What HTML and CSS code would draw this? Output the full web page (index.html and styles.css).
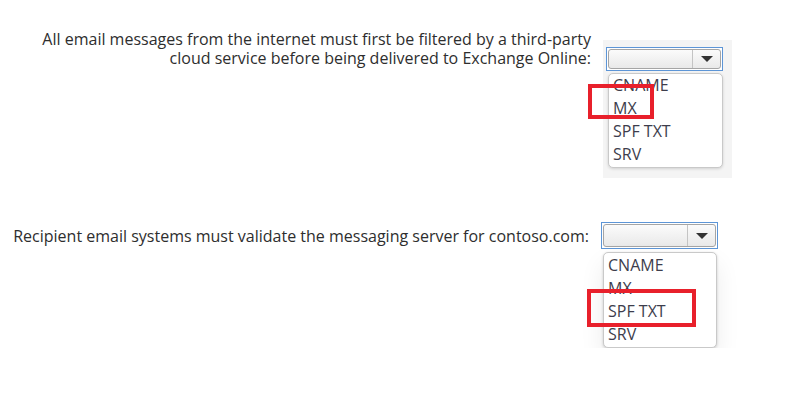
FILE: index.html
```html
<!DOCTYPE html>
<html lang="en">
<head>
    <meta charset="UTF-8">
    <title>DNS records</title>
    <link rel="stylesheet" href="styles.css">
</head>
<body>
    <div class="question first">
        <div class="label">
            All email messages from the internet must first be filtered by a third-party<br>
            cloud service before being delivered to Exchange Online:
        </div>
        <div class="widget shot">
            <div class="select">
                <div class="select-inner">
                    <span class="value"></span>
                    <span class="arrow"></span>
                </div>
            </div>
            <ul class="options">
                <li>CNAME</li>
                <li>MX</li>
                <li>SPF TXT</li>
                <li>SRV</li>
                <span class="mark mark-mx"></span>
            </ul>
        </div>
    </div>

    <div class="question second">
        <div class="label">
            Recipient email systems must validate the messaging server for contoso.com:
        </div>
        <div class="widget">
            <div class="select">
                <div class="select-inner">
                    <span class="value"></span>
                    <span class="arrow"></span>
                </div>
            </div>
            <ul class="options soft">
                <li>CNAME</li>
                <li>MX</li>
                <li>SPF TXT</li>
                <li>SRV</li>
                <span class="mark mark-spf"></span>
            </ul>
        </div>
    </div>
</body>
</html>
```

FILE: styles.css
```css
body {
    margin: 0;
    background: #fff;
    font-family: "Open Sans", "Liberation Sans", sans-serif;
    color: #2e2e2e;
}
.question {
    display: flex;
    align-items: flex-start;
}
.question.first {
    padding-top: 30px;
}
.question.second {
    padding-top: 44px;
}
.label {
    text-align: right;
    box-sizing: border-box;
    font-size: 16px;
}
.first .label {
    width: 591px;
    line-height: 19px;
}
.second .label {
    width: 589px;
    line-height: 20px;
    padding-top: 4px;
}
.widget {
    box-sizing: border-box;
}
.first .widget {
    margin: 10px 0 0 12px;
    width: 129px;
    height: 138px;
    padding: 7px 0 0 3px;
    background: #f4f4f4;
}
.second .widget {
    margin-left: 12px;
}
.select {
    width: 117px;
    height: 24px;
    border: 1px solid #5d95d6;
    box-sizing: border-box;
    padding: 1px;
    background: #fff;
}
.second .select {
    height: 27px;
}
.select-inner {
    display: flex;
    height: 100%;
    border: 1px solid #a5a5a5;
    border-radius: 3px;
    box-sizing: border-box;
    background: linear-gradient(#fbfbfb, #e9e9e9);
}
.value {
    flex-grow: 1;
    border-right: 1px solid #c4c4c4;
}
.arrow {
    width: 27px;
    display: flex;
    align-items: center;
    justify-content: center;
}
.arrow::before {
    content: "";
    border-left: 6px solid transparent;
    border-right: 6px solid transparent;
    border-top: 6px solid #333;
}
.options {
    position: relative;
    list-style: none;
    margin: 2px 0 0 2px;
    padding: 0 0 1px 4px;
    width: 115px;
    box-sizing: border-box;
    background: #fff;
    border: 1px solid #c9c9c9;
    border-radius: 5px;
    box-shadow: 0 1px 3px rgba(0, 0, 0, 0.15);
    font-size: 16px;
    line-height: 23px;
    color: #3d3d4c;
}
.second .options {
    width: 114px;
    margin-top: 3px;
    padding-top: 1px;
}
.options.soft {
    box-shadow: 0 1px 3px rgba(0, 0, 0, 0.18), 0 12px 24px rgba(0, 0, 0, 0.08);
}
.mark {
    position: absolute;
    border: 4px solid #e8202b;
}
.mark-mx {
    left: -21px;
    top: 10px;
    width: 58px;
    height: 27px;
}
.mark-spf {
    left: -17px;
    top: 36px;
    width: 101px;
    height: 30px;
}
```
